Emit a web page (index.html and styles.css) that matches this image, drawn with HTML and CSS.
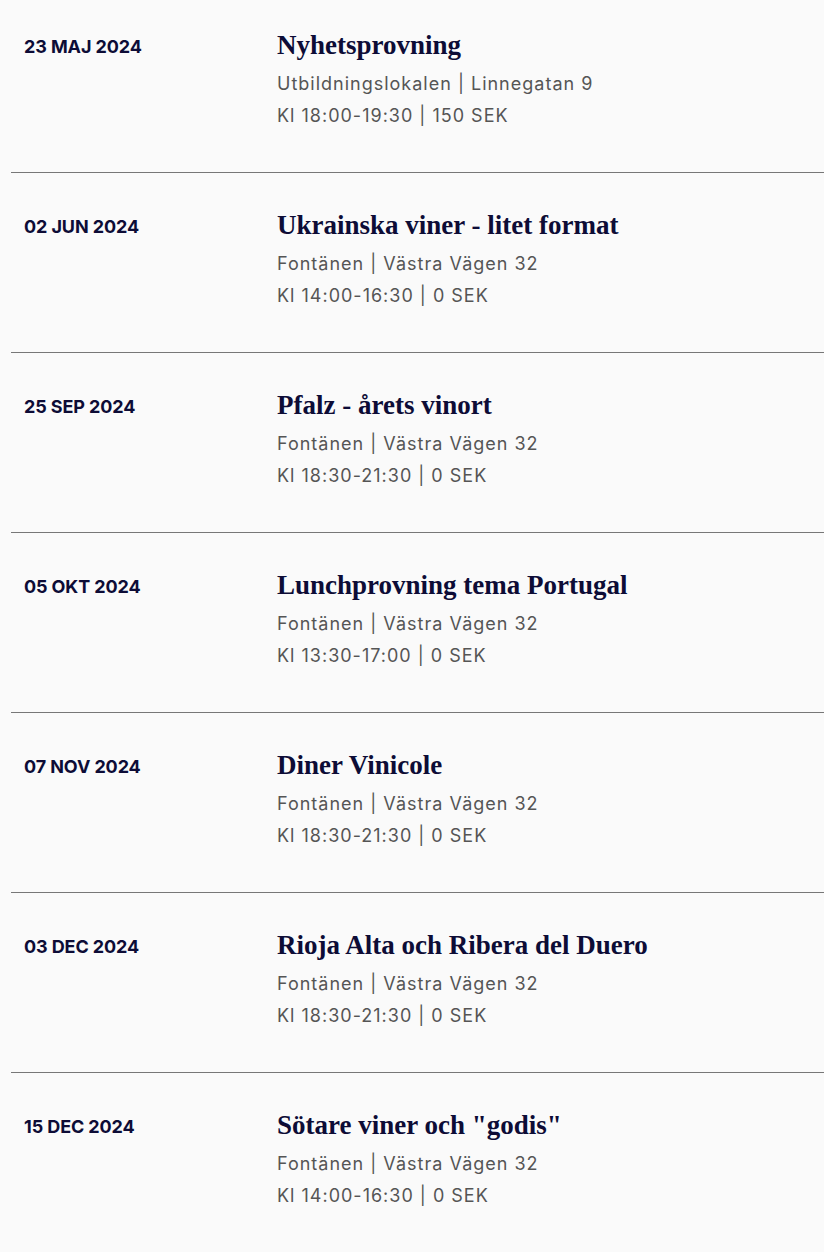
FILE: index.html
```html
<!DOCTYPE html>
<html lang="sv">
<head>
<meta charset="utf-8">
<title>Evenemang</title>
<link rel="stylesheet" href="styles.css">
</head>
<body>
<ul class="events">
  <li class="event">
    <div class="event-date">23 MAJ 2024</div>
    <div class="event-info">
      <h3 class="event-title">Nyhetsprovning</h3>
      <p class="event-meta">Utbildningslokalen | Linnegatan 9</p>
      <p class="event-meta">Kl 18:00-19:30 | 150 SEK</p>
    </div>
  </li>
  <li class="event">
    <div class="event-date">02 JUN 2024</div>
    <div class="event-info">
      <h3 class="event-title">Ukrainska viner - litet format</h3>
      <p class="event-meta">Fontänen | Västra Vägen 32</p>
      <p class="event-meta">Kl 14:00-16:30 | 0 SEK</p>
    </div>
  </li>
  <li class="event">
    <div class="event-date">25 SEP 2024</div>
    <div class="event-info">
      <h3 class="event-title">Pfalz - årets vinort</h3>
      <p class="event-meta">Fontänen | Västra Vägen 32</p>
      <p class="event-meta">Kl 18:30-21:30 | 0 SEK</p>
    </div>
  </li>
  <li class="event">
    <div class="event-date">05 OKT 2024</div>
    <div class="event-info">
      <h3 class="event-title">Lunchprovning tema Portugal</h3>
      <p class="event-meta">Fontänen | Västra Vägen 32</p>
      <p class="event-meta">Kl 13:30-17:00 | 0 SEK</p>
    </div>
  </li>
  <li class="event">
    <div class="event-date">07 NOV 2024</div>
    <div class="event-info">
      <h3 class="event-title">Diner Vinicole</h3>
      <p class="event-meta">Fontänen | Västra Vägen 32</p>
      <p class="event-meta">Kl 18:30-21:30 | 0 SEK</p>
    </div>
  </li>
  <li class="event">
    <div class="event-date">03 DEC 2024</div>
    <div class="event-info">
      <h3 class="event-title">Rioja Alta och Ribera del Duero</h3>
      <p class="event-meta">Fontänen | Västra Vägen 32</p>
      <p class="event-meta">Kl 18:30-21:30 | 0 SEK</p>
    </div>
  </li>
  <li class="event">
    <div class="event-date">15 DEC 2024</div>
    <div class="event-info">
      <h3 class="event-title">Sötare viner och "godis"</h3>
      <p class="event-meta">Fontänen | Västra Vägen 32</p>
      <p class="event-meta">Kl 14:00-16:30 | 0 SEK</p>
    </div>
  </li>
</ul>
</body>
</html>
```

FILE: styles.css
```css
html, body {
  margin: 0;
  padding: 0;
  background: #fafafa;
}

.events {
  list-style: none;
  margin: 0;
  padding: 0 0 0 11px;
}

.event {
  display: grid;
  grid-template-columns: 253px 1fr;
  align-items: start;
  box-sizing: border-box;
  height: 180px;
  padding: 38px 13px 0 13px;
  border-bottom: 1px solid #777777;
}

.event:first-child {
  height: 173px;
  padding-top: 31px;
}

.event-date {
  font-family: Inter, "Liberation Sans", sans-serif;
  font-weight: 700;
  font-size: 18px;
  letter-spacing: -0.1px;
  line-height: 20px;
  color: #0d0c36;
  padding-top: 6px;
}

.event-info {
  display: flex;
  flex-direction: column;
}

.event-title {
  margin: 0 0 9px 0;
  font-family: "Liberation Serif", "DejaVu Serif", serif;
  font-weight: 700;
  font-size: 27px;
  line-height: 28px;
  color: #0d0c36;
}

.event-meta {
  margin: 0;
  font-family: Inter, "Liberation Sans", sans-serif;
  font-weight: 400;
  font-size: 18px;
  letter-spacing: 1px;
  line-height: 32px;
  color: #555555;
}
```
